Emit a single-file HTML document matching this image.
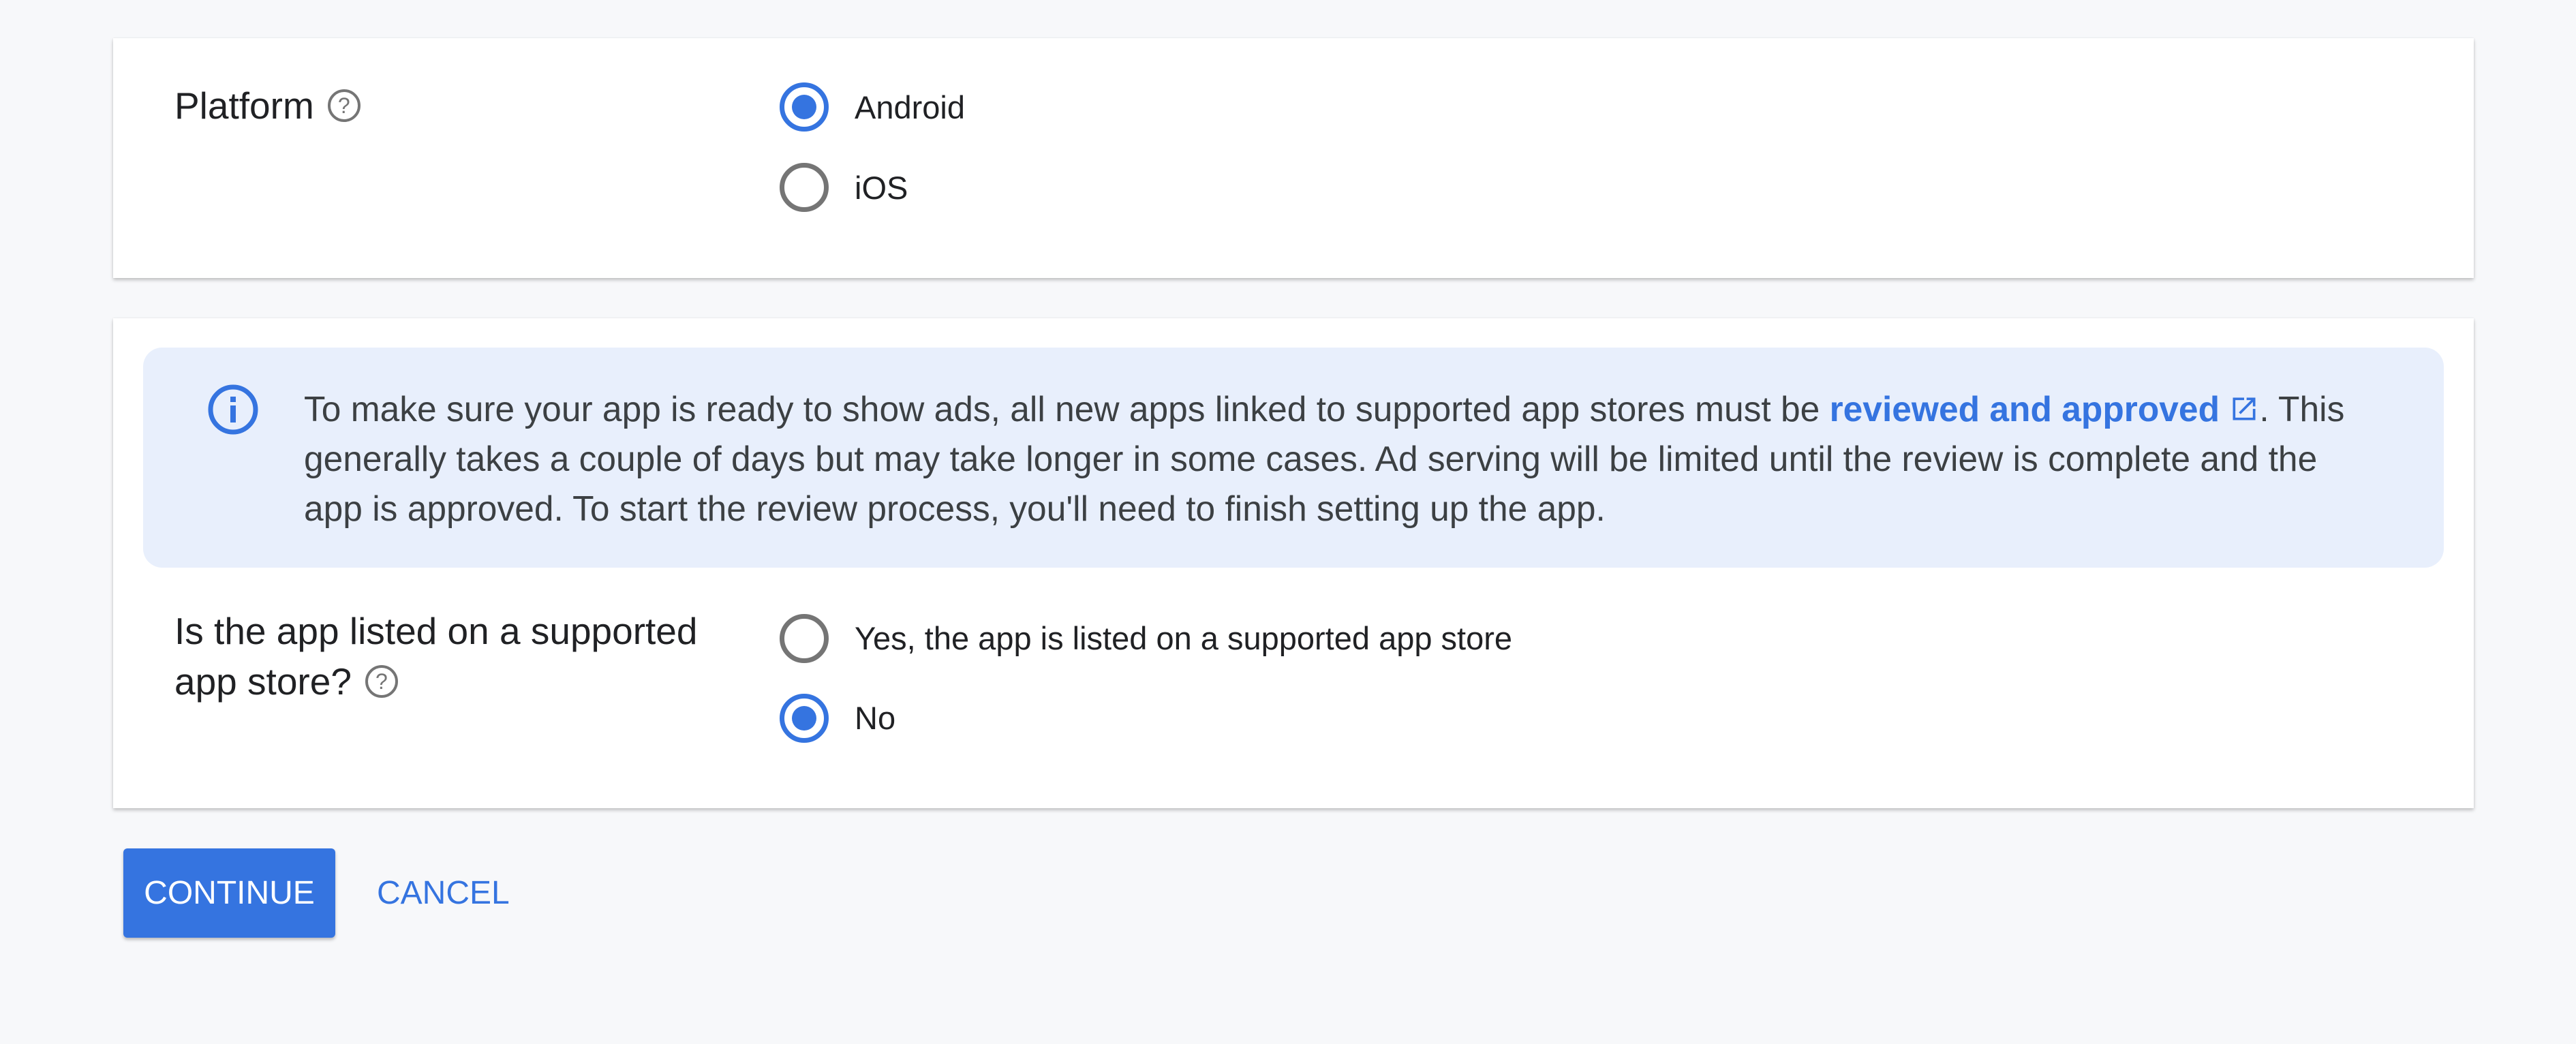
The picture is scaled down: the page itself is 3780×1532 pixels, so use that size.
<!DOCTYPE html>
<html><head><meta charset="utf-8"><style>
html,body{margin:0;padding:0;}
body{width:3780px;height:1532px;background:#f7f8fa;position:relative;overflow:hidden;font-family:"Liberation Sans",Arial,sans-serif;}
.card{position:absolute;left:166px;width:3464px;background:#fff;box-shadow:0 3px 5px rgba(0,0,0,.22),0 0 2px rgba(0,0,0,.08);}
.lbl{position:absolute;font-size:55px;color:#202124;line-height:74px;}
.help{display:inline-block;width:40px;height:40px;border:4px solid #757575;border-radius:50%;color:#757575;font-size:32px;line-height:40px;text-align:center;vertical-align:middle;margin-left:20px;position:relative;top:-4px;}
.radio{position:absolute;width:58px;height:58px;border:7px solid #757575;border-radius:50%;}
.radio.on{border-color:#3574e0;}
.radio.on:after{content:"";position:absolute;left:11px;top:11px;width:36px;height:36px;border-radius:50%;background:#3574e0;}
.opt{position:absolute;font-size:47px;color:#202124;line-height:60px;}
.banner{position:absolute;left:44px;top:43px;width:3376px;height:323px;background:#e8effc;border-radius:28px;}
.txt{position:absolute;left:236px;top:54px;font-size:51.5px;line-height:73px;color:#3c4043;white-space:nowrap;}
.txt a{color:#3574e0;font-weight:bold;text-decoration:none;}
.btn{position:absolute;left:181px;top:1245px;width:311px;height:131px;background:#3574e0;border-radius:6px;box-shadow:0 3px 5px rgba(0,0,0,.25);color:#fff;font-size:48px;line-height:131px;text-align:center;}
.cancel{position:absolute;left:553px;top:1245px;line-height:131px;font-size:48px;color:#3574e0;}
</style></head><body>
<div class="card" style="top:56px;height:352px;">
  <div class="lbl" style="left:90px;top:62px;">Platform<span class="help">?</span></div>
  <div class="radio on" style="left:978px;top:65px;"></div>
  <div class="opt" style="left:1088px;top:72px;">Android</div>
  <div class="radio" style="left:978px;top:183px;"></div>
  <div class="opt" style="left:1088px;top:190px;">iOS</div>
</div>
<div class="card" style="top:467px;height:719px;">
  <div class="banner">
    <svg style="position:absolute;left:92px;top:51px;" width="80" height="80" viewBox="0 0 80 80"><circle cx="40" cy="40" r="33" fill="none" stroke="#3574e0" stroke-width="7"/><rect x="36" y="34" width="8" height="25" fill="#3574e0"/><rect x="36" y="21" width="8" height="8" fill="#3574e0"/></svg>
    <div class="txt">To make sure your app is ready to show ads, all new apps linked to supported app stores must be <a>reviewed and approved <svg width="44" height="44" viewBox="0 0 24 24" style="vertical-align:-4px"><path d="M19 19H5V5h7V3H3v18h18v-9h-2v7zM14 3v2h3.6l-9.8 9.8 1.4 1.4L19 6.4V10h2V3h-7z" fill="#3574e0"/></svg></a>. This<br>generally takes a couple of days but may take longer in some cases. Ad serving will be limited until the review is complete and the<br>app is approved. To start the review process, you'll need to finish setting up the app.</div>
  </div>
  <div class="lbl" style="left:90px;top:422px;">Is the app listed on a supported<br>app store?<span class="help">?</span></div>
  <div class="radio" style="left:978px;top:434px;"></div>
  <div class="opt" style="left:1088px;top:440px;">Yes, the app is listed on a supported app store</div>
  <div class="radio on" style="left:978px;top:551px;"></div>
  <div class="opt" style="left:1088px;top:557px;">No</div>
</div>
<div class="btn">CONTINUE</div>
<div class="cancel">CANCEL</div>
</body></html>
